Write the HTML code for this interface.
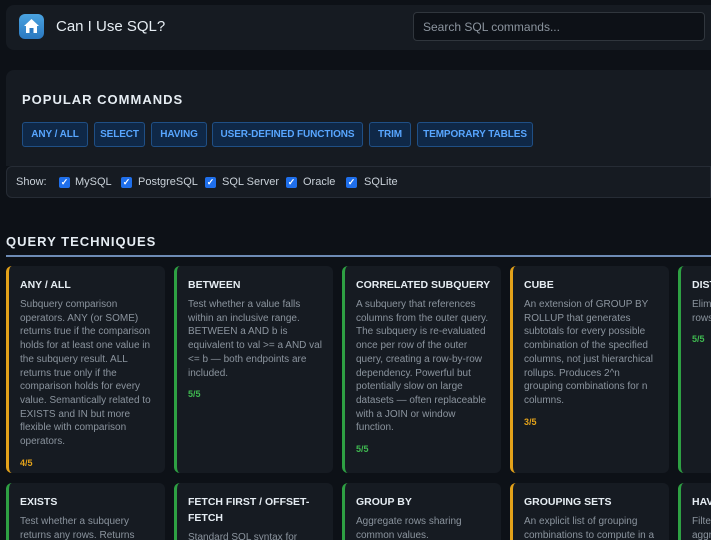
<!DOCTYPE html>
<html><head><meta charset="utf-8"><style>
*{box-sizing:border-box;margin:0;padding:0}
html,body{width:711px;height:540px;overflow:hidden}
body{background:#0d1117;font-family:"Liberation Sans",sans-serif;color:#c9d1d9;position:relative}
.hdr{position:absolute;left:6px;top:5px;width:705px;height:45px;background:#161b22;border-radius:8px 0 0 8px}
.logo{position:absolute;left:19px;top:14px;width:25px;height:25px;border-radius:6px;background:linear-gradient(#4aa3e0,#2a78c0)}
.title{position:absolute;left:56px;top:18px;font-size:15px;color:#e6edf3}
.search{position:absolute;left:413px;top:12px;width:292px;height:29px;border:1px solid #30363d;border-radius:4px;background:#0d1117;font-size:12px;color:#8b949e;padding:7px 9px}
.pop{position:absolute;left:6px;top:70px;width:705px;height:96px;background:#161b22;border-radius:8px 0 0 0}
.pt{position:absolute;left:22px;top:92px;font-size:13px;font-weight:bold;letter-spacing:1px;color:#e6edf3}
.btn{position:absolute;top:122px;height:25px;border:1px solid #1f4f85;background:#0f2847;border-radius:3px;color:#58a6ff;font-size:10px;font-weight:bold;line-height:23px;text-align:center;white-space:nowrap;overflow:hidden;letter-spacing:-0.1px}
.flt{position:absolute;left:6px;top:166px;width:705px;height:32px;background:#161b22;border:1px solid #262c35;border-radius:6px 0 0 6px;font-size:11px;color:#c9d1d9}
.flt span{position:absolute;top:9px}
.flt .cb{top:10px;width:11px;height:11px;background:#1f6feb;border-radius:2px;color:#fff;font-size:9px;line-height:11px;text-align:center;font-weight:bold}
.qt{position:absolute;left:6px;top:234px;font-size:13px;font-weight:bold;letter-spacing:1px;color:#e6edf3}
.ql{position:absolute;left:6px;top:255px;width:705px;height:2px;background:#6d8bb5}
.card{position:absolute;width:159px;background:#161b22;border-radius:6px;border-left:3px solid #2ea043;padding:11px 10px 0 11px;overflow:hidden}
.card.y{border-left-color:#e3a21a}
.card h3{font-size:10.5px;font-weight:bold;color:#e6edf3;margin-bottom:5px;line-height:16px;white-space:nowrap}
.card p{font-size:10px;line-height:13.7px;color:#8b949e}
.card .s{font-size:9px;font-weight:bold;margin-top:9px;color:#3fb950}
.card.y .s{color:#e3a21a}
</style></head><body>
<div class="hdr"></div>
<div class="logo"><svg width="25" height="25" viewBox="0 0 25 25"><path d="M5 12 L12.5 5 L20 12 L18 12 L18 19 L7 19 L7 12Z" fill="#fff"/><rect x="10.5" y="14" width="4" height="5" fill="#2a78c0"/></svg></div>
<div class="title">Can I Use SQL?</div>
<div class="search">Search SQL commands...</div>
<div class="pop"></div>
<div class="pt">POPULAR COMMANDS</div>
<div class="btn" style="left:22px;width:66px">ANY / ALL</div>
<div class="btn" style="left:94px;width:51px">SELECT</div>
<div class="btn" style="left:151px;width:56px">HAVING</div>
<div class="btn" style="left:212px;width:151px">USER-DEFINED FUNCTIONS</div>
<div class="btn" style="left:369px;width:42px">TRIM</div>
<div class="btn" style="left:417px;width:116px">TEMPORARY TABLES</div>
<div class="flt">
<span style="left:9px">Show:</span>
<span class="cb" style="left:52px">✓</span><span style="left:68px">MySQL</span>
<span class="cb" style="left:114px">✓</span><span style="left:131px">PostgreSQL</span>
<span class="cb" style="left:198px">✓</span><span style="left:215px">SQL Server</span>
<span class="cb" style="left:279px">✓</span><span style="left:296px">Oracle</span>
<span class="cb" style="left:339px">✓</span><span style="left:357px">SQLite</span>
</div>
<div class="qt">QUERY TECHNIQUES</div>
<div class="ql"></div>

<div class="card y" style="left:6px;top:266px;height:207px"><h3>ANY / ALL</h3><p>Subquery comparison operators. ANY (or SOME) returns true if the comparison holds for at least one value in the subquery result. ALL returns true only if the comparison holds for every value. Semantically related to EXISTS and IN but more flexible with comparison operators.</p><div class="s">4/5</div></div>
<div class="card" style="left:174px;top:266px;height:207px"><h3>BETWEEN</h3><p>Test whether a value falls within an inclusive range. BETWEEN a AND b is equivalent to val &gt;= a AND val &lt;= b — both endpoints are included.</p><div class="s">5/5</div></div>
<div class="card" style="left:342px;top:266px;height:207px"><h3>CORRELATED SUBQUERY</h3><p>A subquery that references columns from the outer query. The subquery is re-evaluated once per row of the outer query, creating a row-by-row dependency. Powerful but potentially slow on large datasets — often replaceable with a JOIN or window function.</p><div class="s">5/5</div></div>
<div class="card y" style="left:510px;top:266px;height:207px"><h3>CUBE</h3><p>An extension of GROUP BY ROLLUP that generates subtotals for every possible combination of the specified columns, not just hierarchical rollups. Produces 2^n grouping combinations for n columns.</p><div class="s">3/5</div></div>
<div class="card" style="left:678px;top:266px;height:207px"><h3>DISTINCT</h3><p>Eliminate duplicate result rows.</p><div class="s">5/5</div></div>

<div class="card" style="left:6px;top:483px;height:80px"><h3>EXISTS</h3><p>Test whether a subquery returns any rows. Returns</p></div>
<div class="card" style="left:174px;top:483px;height:80px"><h3>FETCH FIRST / OFFSET-<br>FETCH</h3><p>Standard SQL syntax for</p></div>
<div class="card" style="left:342px;top:483px;height:80px"><h3>GROUP BY</h3><p>Aggregate rows sharing common values.</p></div>
<div class="card y" style="left:510px;top:483px;height:80px"><h3>GROUPING SETS</h3><p>An explicit list of grouping combinations to compute in a</p></div>
<div class="card" style="left:678px;top:483px;height:80px"><h3>HAVING</h3><p>Filter groups after GROUP BY aggregation.</p></div>
</body></html>
